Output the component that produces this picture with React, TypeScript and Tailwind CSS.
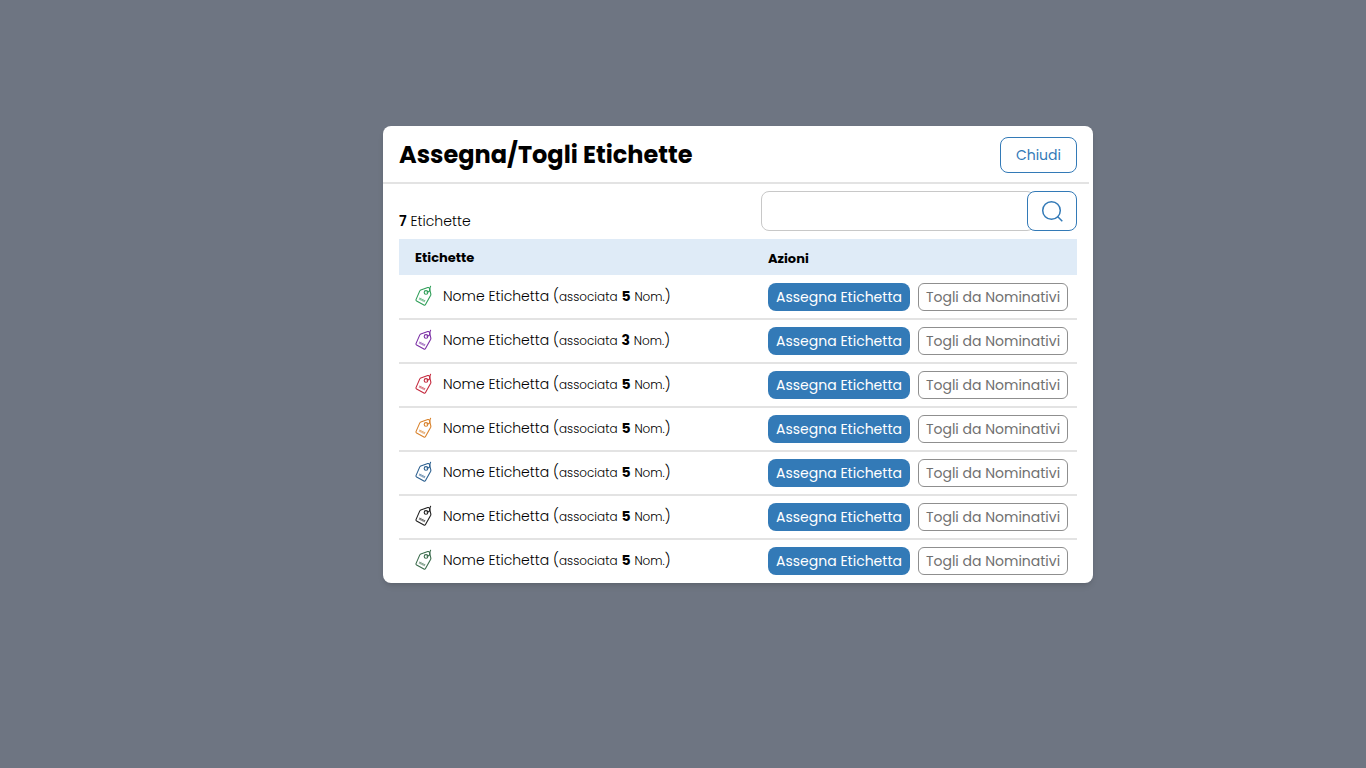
import { clsx } from "clsx";

const labels = [
  { id: 1, color: "text-[#2f9e58]", count: 5 },
  { id: 2, color: "text-[#7b2fa5]", count: 3 },
  { id: 3, color: "text-[#c4293d]", count: 5 },
  { id: 4, color: "text-[#d9822b]", count: 5 },
  { id: 5, color: "text-[#2b5f8f]", count: 5 },
  { id: 6, color: "text-[#1f1f1f]", count: 5 },
  { id: 7, color: "text-[#3a6b4c]", count: 5 },
];

function TagIcon({ className }: { className?: string }) {
  return (
    <svg
      viewBox="0 0 18 22"
      fill="none"
      stroke="currentColor"
      strokeWidth="1.1"
      strokeLinecap="round"
      strokeLinejoin="round"
      className={clsx("h-[22px] w-[18px] shrink-0", className)}
      aria-hidden="true"
    >
      <path d="M5.8 5 12.8 2.5c.8-.2 1.3 0 1.6.7l1.4 5.6c.1.5.1.9-.1 1.4l-5.2 9.4c-.4.7-.9.9-1.6.5l-7.3-4.1c-.6-.4-.8-.9-.5-1.6L4.8 5.9c.2-.5.5-.7 1-.9Z" />
      <circle cx="11" cy="7.4" r="1.8" />
      <path d="M12 7c1.5.2 2.6-.6 2.8-1.9.1-1.3 0-2.5.8-3.8" />
      <path
        d="m4.8 13 .6 1.8M6 13.5l-1.8.7M6.8 14l.6 1.8M8 14.5l-1.8.7M8.8 15l.6 1.8M10 15.5l-1.8.7"
        strokeWidth="0.6"
      />
    </svg>
  );
}

function SearchIcon() {
  return (
    <svg
      viewBox="0 0 22 22"
      fill="none"
      stroke="currentColor"
      strokeWidth="1.5"
      className="h-[22px] w-[22px]"
      aria-hidden="true"
    >
      <circle cx="10.5" cy="10.5" r="8.8" />
      <path d="m16.5 16.5 4.8 4.8" />
    </svg>
  );
}

function LabelRow({ color, count }: { color: string; count: number }) {
  return (
    <tr className="group">
      <td className="border-b-2 border-[#e3e3e3] py-[7px] pl-4 group-first:pt-2 group-last:border-b-0 group-last:pb-2">
        <div className="flex h-7 items-center gap-2.5 pb-0.5">
          <TagIcon className={color} />
          <span className="text-sm font-light">
            Nome Etichetta (<span className="text-xs">associata</span>{" "}
            <b className="font-bold">{count}</b>{" "}
            <span className="text-xs">Nom.</span>)
          </span>
        </div>
      </td>
      <td className="border-b-2 border-[#e3e3e3] py-[7px] group-first:pt-2 group-last:border-b-0 group-last:pb-2">
        <div className="flex gap-2">
          <button
            type="button"
            className="h-7 w-[142px] rounded-lg bg-[#337ab7] text-sm whitespace-nowrap text-white"
          >
            Assegna Etichetta
          </button>
          <button
            type="button"
            className="h-7 w-[150px] rounded-md border border-[#8f8f8f] text-sm whitespace-nowrap text-[#707070]"
          >
            Togli da Nominativi
          </button>
        </div>
      </td>
    </tr>
  );
}

export default function App() {
  return (
    <div className="flex min-h-screen items-start justify-center bg-[#6e7582] pt-[126px] pl-[110px] font-['Poppins','Inter',sans-serif] text-black">
      <section
        role="dialog"
        aria-labelledby="dialog-title"
        className="w-full max-w-[710px] rounded-lg bg-white shadow-md"
      >
        <header className="mr-1 flex items-center justify-between border-b-2 border-[#e3e3e3] pt-[11px] pr-3 pb-[9px] pl-4">
          <h1 id="dialog-title" className="text-2xl font-bold">
            Assegna/Togli Etichette
          </h1>
          <button
            type="button"
            className="h-9 rounded-lg border border-[#337ab7] px-[15px] text-sm text-[#337ab7]"
          >
            Chiudi
          </button>
        </header>

        <div className="px-4 pt-[7px]">
          <div className="mb-2 flex items-end justify-between">
            <p className="text-sm font-light">
              <b className="font-semibold">7</b> Etichette
            </p>
            <form className="flex w-[316px]">
              <input
                type="text"
                aria-label="Cerca etichetta"
                className="-mr-2 h-10 min-w-0 flex-1 rounded-lg border border-[#c8c8c8] px-3 text-sm outline-none"
              />
              <button
                type="button"
                aria-label="Cerca"
                className="relative flex h-10 w-[50px] items-center justify-center rounded-lg border border-[#337ab7] bg-white text-[#337ab7]"
              >
                <SearchIcon />
              </button>
            </form>
          </div>

          <table className="w-full table-fixed border-separate border-spacing-0 text-left">
            <thead>
              <tr className="h-9 bg-[#dfebf7] text-[13px] leading-5">
                <th className="pt-0.5 pl-4 font-bold">Etichette</th>
                <th className="w-[309px] pt-1 font-bold">Azioni</th>
              </tr>
            </thead>
            <tbody>
              {labels.map((label) => (
                <LabelRow
                  key={label.id}
                  color={label.color}
                  count={label.count}
                />
              ))}
            </tbody>
          </table>
        </div>
      </section>
    </div>
  );
}
